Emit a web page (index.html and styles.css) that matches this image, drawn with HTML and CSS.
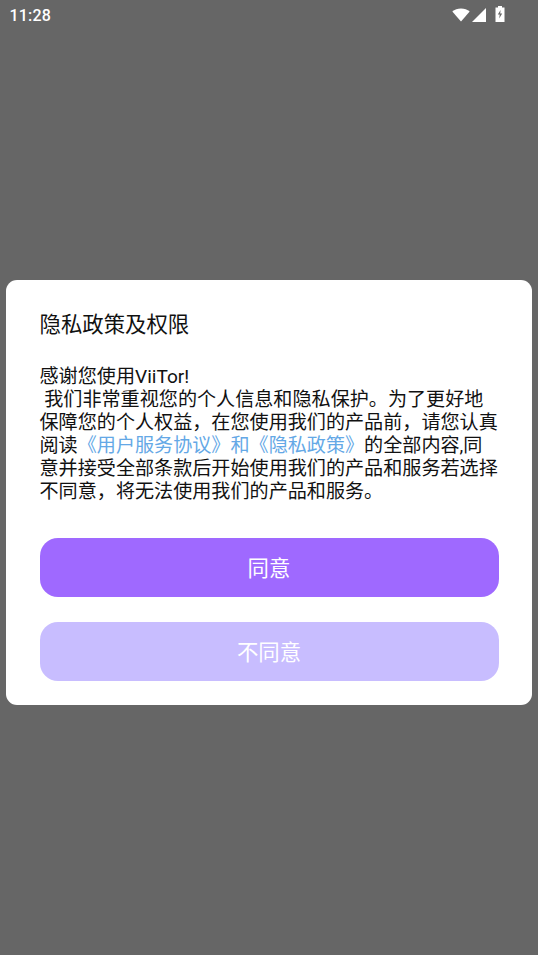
FILE: index.html
```html
<!DOCTYPE html>
<html lang="zh-CN">
<head>
<meta charset="utf-8">
<title>隐私政策及权限</title>
<link rel="stylesheet" href="styles.css">
</head>
<body>
<div class="status">
  <span class="time">11:28</span>
  <div class="status-icons">
    <svg class="wifi" width="18" height="14" viewBox="0 0 18 14"><path d="M0.3 3.6C2.6 1.5 5.6 0.4 9 0.4s6.4 1.1 8.7 3.2L9 13.4z" fill="#fff"/></svg>
    <svg class="signal" width="14" height="14" viewBox="0 0 14 14"><path d="M14 0V14H0z" fill="#fff"/></svg>
    <svg class="battery" width="10" height="16" viewBox="0 0 10 16"><path d="M3 0h4v1.5h2.5V16H0.5V1.5H3z" fill="#fff"/><path d="M5.6 4L2.8 8.6h1.9L4.2 12.4 7.2 7.4H5.2z" fill="#666"/></svg>
  </div>
</div>
<main class="stage">
  <section class="dialog">
    <h1 class="title">隐私政策及权限</h1>
    <p class="body">感谢您使用ViiTor!<br>&nbsp;我们非常重视您的个人信息和隐私保护。为了更好地保障您的个人权益，在您使用我们的产品前，请您认真阅读<a class="link">《用户服务协议》和《隐私政策》</a>的全部内容,同意并接受全部条款后开始使用我们的产品和服务若选择不同意，将无法使用我们的产品和服务。</p>
    <div class="actions">
      <button class="btn primary">同意</button>
      <button class="btn secondary">不同意</button>
    </div>
  </section>
</main>
</body>
</html>
```
FILE: styles.css
```css
* { box-sizing: border-box; }
html, body { margin: 0; height: 100%; }
body {
  width: 538px;
  height: 955px;
  overflow: hidden;
  background: #666666;
  font-family: Roboto, "Noto Sans CJK SC", sans-serif;
  display: flex;
  flex-direction: column;
}
.status {
  height: 30px;
  display: flex;
  align-items: center;
  justify-content: space-between;
  padding: 0 33px 0 9.5px;
  color: #fff;
}
.time { font-size: 16px; font-weight: 500; letter-spacing: 0.2px; }
.status-icons { display: flex; align-items: center; gap: 2px; }
.battery { margin-left: 7px; margin-top: -2px; }
.stage { flex: 1; padding: 250px 6px 0; }
.dialog {
  background: #fff;
  border-radius: 11px;
  height: 425px;
  padding: 30px 33.5px 0;
  color: #111;
}
.title {
  margin: 0;
  font-size: 21.4px;
  font-weight: 400;
  line-height: 30px;
}
.body {
  margin: 25px -2px 0 0;
  font-size: 19.1px;
  line-height: 23px;
}
.link { color: #64a8e6; }
.actions { display: flex; flex-direction: column; gap: 25px; margin-top: 35px; }
.btn {
  height: 59px;
  border: 0;
  border-radius: 18px;
  color: #fff;
  font: inherit;
  font-size: 21.4px;
  padding: 0 0 2px;
}
.primary { background: #9f69ff; }
.secondary { background: #c8bdff; }
```
